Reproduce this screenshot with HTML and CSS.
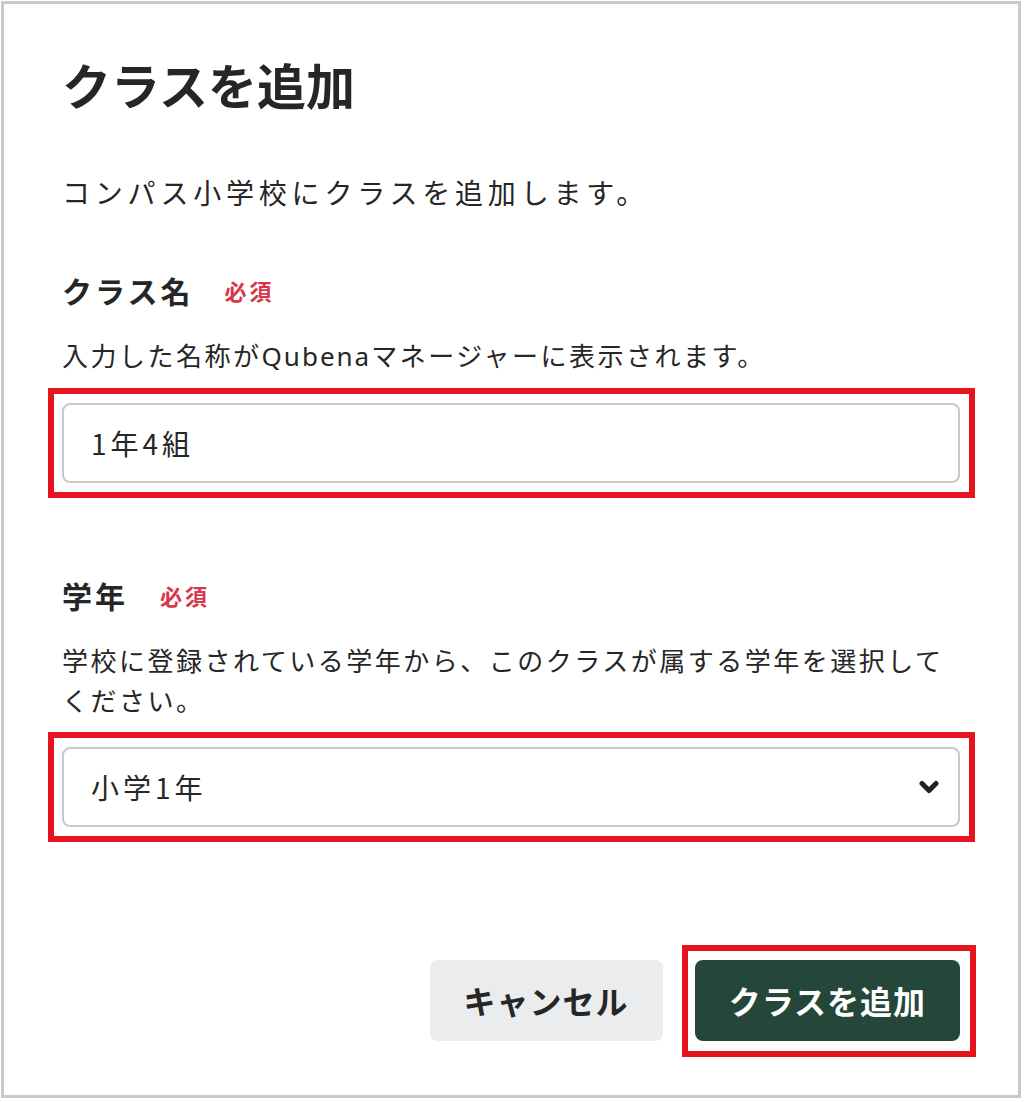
FILE: index.html
```html
<!DOCTYPE html>
<html lang="ja">
<head>
<meta charset="utf-8">
<title>クラスを追加</title>
<link rel="stylesheet" href="styles.css">
</head>
<body>
<div class="frame">
  <h1 class="title">クラスを追加</h1>
  <p class="desc">コンパス小学校にクラスを追加します。</p>

  <div class="field field-first">
    <div class="label-row">
      <span class="label">クラス名</span>
      <span class="required">必須</span>
    </div>
    <p class="help">入力した名称が<span class="latin">Qubena</span>マネージャーに表示されます。</p>
    <div class="mark mark-field">
      <input class="control input" type="text" value="1年4組">
    </div>
  </div>

  <div class="field field-second">
    <div class="label-row">
      <span class="label">学年</span>
      <span class="required">必須</span>
    </div>
    <p class="help">学校に登録されている学年から、このクラスが属する学年を選択してください。</p>
    <div class="mark mark-field">
      <div class="control select">
        <span class="select-value">小学1年</span>
        <svg class="chevron" width="20" height="14" viewBox="0 0 20 14" aria-hidden="true">
          <polyline points="3,3.5 10,10.5 17,3.5" fill="none" stroke="#222222" stroke-width="5" stroke-linecap="round" stroke-linejoin="round"/>
        </svg>
      </div>
    </div>
  </div>

  <div class="actions">
    <button class="btn btn-cancel" type="button">キャンセル</button>
    <div class="mark mark-btn">
      <button class="btn btn-primary" type="button">クラスを追加</button>
    </div>
  </div>
</div>
</body>
</html>
```

FILE: styles.css
```css
html, body {
  margin: 0;
  padding: 0;
  background: #ffffff;
}

body {
  font-family: "Noto Sans CJK JP", "Noto Sans", sans-serif;
  color: #262626;
}

.frame {
  box-sizing: border-box;
  width: 1020px;
  height: 1097px;
  margin: 1px 0 0 1px;
  border: 3px solid #c9c9c9;
  padding: 50px 58px 0;
  background: #ffffff;
}

.title {
  margin: 0;
  font-size: 49px;
  line-height: 60px;
  font-weight: 700;
  letter-spacing: 0;
}

.desc {
  margin: 58px 0 0;
  font-size: 28px;
  line-height: 40px;
  letter-spacing: 4.8px;
}

.field-first {
  margin-top: 58px;
}

.field-second {
  margin-top: 92px;
}

.label-row {
  display: flex;
  align-items: center;
  height: 40px;
}

.label {
  font-size: 30px;
  line-height: 40px;
  font-weight: 700;
  letter-spacing: 3px;
}

.required {
  margin-left: 31px;
  font-size: 22px;
  line-height: 40px;
  font-weight: 700;
  letter-spacing: 3px;
  color: #d7364b;
}

.field-second .required {
  margin-left: 32px;
}

.help {
  margin: 25px 0 0;
  font-size: 26px;
  line-height: 40px;
  letter-spacing: 2.5px;
}

.latin {
  font-family: "Noto Sans", sans-serif;
  letter-spacing: 2px;
}

.mark {
  border: 6px solid #e6141e;
  background: #ffffff;
}

.mark-field {
  margin: 12px -15px -15px -14px;
  padding: 9px 9px 9px 8px;
}

.control {
  box-sizing: border-box;
  display: block;
  width: 100%;
  height: 80px;
  border: 2px solid #c9c9c9;
  border-radius: 8px;
  background: #ffffff;
  font-family: "Noto Sans CJK JP", "Noto Sans", sans-serif;
  font-size: 28px;
  letter-spacing: 4px;
  color: #262626;
}

.input {
  padding: 0 27px;
  margin: 0;
  outline: none;
}

.select {
  display: flex;
  align-items: center;
  justify-content: space-between;
  padding: 0 19px 0 27px;
}

.select-value {
  line-height: 40px;
}

.chevron {
  display: block;
  flex: none;
}

.actions {
  display: flex;
  justify-content: flex-end;
  align-items: center;
  gap: 32px;
  margin-top: 133px;
}

.btn {
  box-sizing: border-box;
  height: 81px;
  padding: 0 34px;
  border: none;
  border-radius: 8px;
  font-family: "Noto Sans CJK JP", "Noto Sans", sans-serif;
  font-size: 32px;
  font-weight: 700;
  letter-spacing: 1px;
  line-height: 81px;
  cursor: pointer;
}

.btn-cancel {
  background: #ebeced;
  color: #262626;
}

.btn-primary {
  display: block;
  background: #24473a;
  color: #ffffff;
}

.mark-btn {
  margin: -15px -16px -16px -13px;
  padding: 9px 10px 10px 7px;
}
```
